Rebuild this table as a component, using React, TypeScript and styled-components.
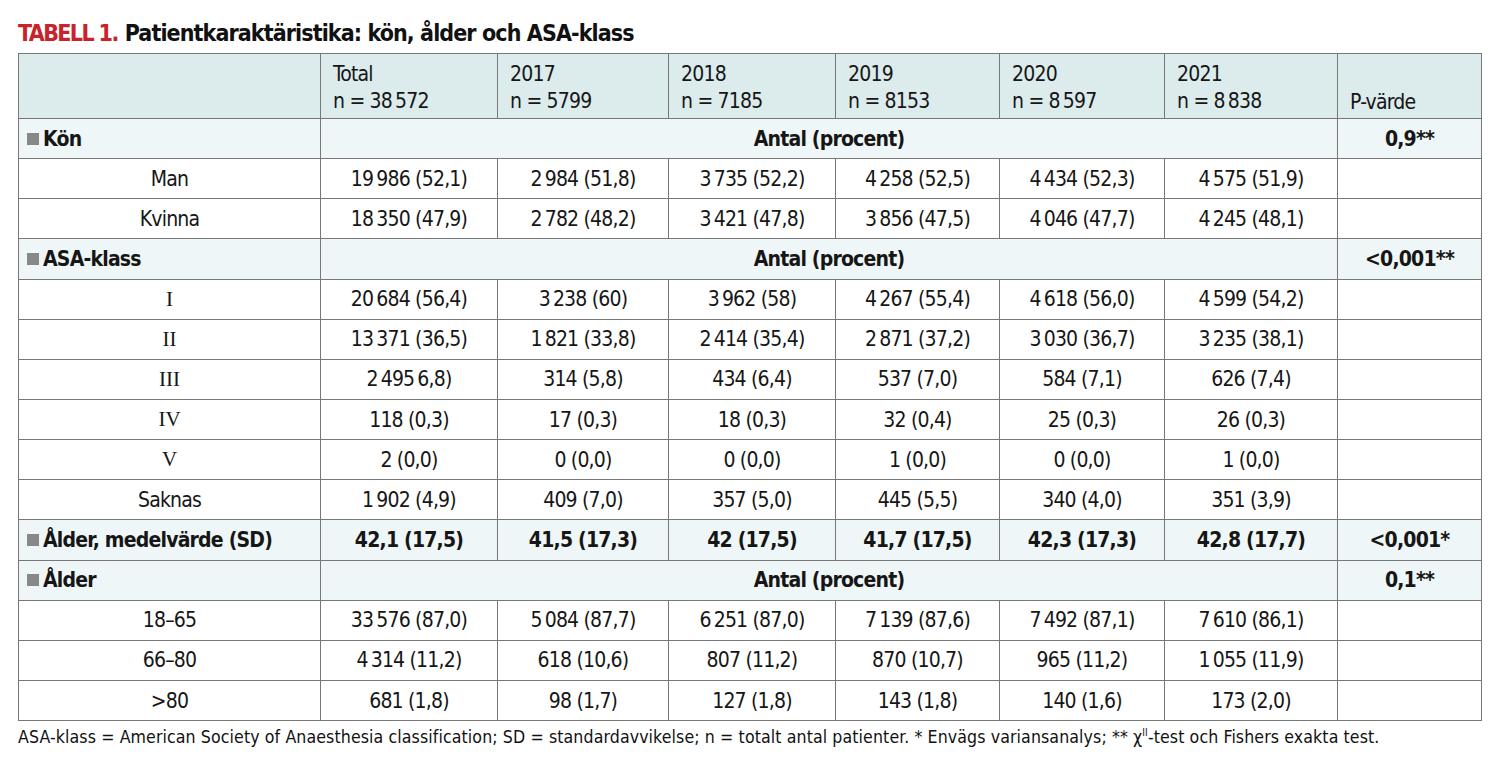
import React from "react";
import styled, { createGlobalStyle } from "styled-components";

const Global = createGlobalStyle`
  html, body { margin: 0; padding: 0; background: #fff; }
  body { font-family: "DejaVu Sans Condensed", "Roboto", sans-serif; color: #161616; }
`;

const Page = styled.div`
  padding: 18px 0 0 18px;
  width: 1463px;
`;

const Title = styled.h1`
  margin: 0 0 5px 0;
  font-size: 23px;
  line-height: 30px;
  font-weight: 700;
  color: #111;
  letter-spacing: -0.9px;
  white-space: nowrap;
`;

const Label = styled.span`
  color: #c8222a;
  font-weight: 700;
  letter-spacing: -1.6px;
  margin-right: 7px;
`;

const Table = styled.table`
  width: 1463px;
  border-collapse: collapse;
  table-layout: fixed;
  font-size: 21px;
  letter-spacing: -0.8px;
  border: 1.5px solid #777;
`;

const HeadRow = styled.tr`
  height: 65px;
`;

const HeadCell = styled.th<{ $bottom?: boolean }>`
  background: #dcebec;
  border: 1.5px solid #777;
  text-align: left;
  font-weight: 400;
  padding: ${(p) => (p.$bottom ? "0 12px 2px" : "3px 12px 0")};
  vertical-align: ${(p) => (p.$bottom ? "bottom" : "middle")};
  line-height: 27px;
`;

const Row = styled.tr<{ $section?: boolean }>`
  background: ${(p) => (p.$section ? "#eff6f7" : "#fff")};
  height: 40.15px;
`;

const Cell = styled.td<{ $bold?: boolean; $left?: boolean; $serif?: boolean }>`
  border: 1.5px solid #777;
  text-align: ${(p) => (p.$left ? "left" : "center")};
  padding: 0 8px;
  font-weight: ${(p) => (p.$bold ? 700 : 400)};
  font-family: ${(p) => (p.$serif ? '"Liberation Serif", serif' : "inherit")};
  letter-spacing: ${(p) => (p.$serif ? "0" : "inherit")};
  white-space: nowrap;
`;

const Square = styled.span`
  display: inline-block;
  width: 12px;
  height: 12px;
  background: #888;
  margin-right: 4px;
  vertical-align: 1px;
`;

const Footer = styled.p`
  margin: 6px 0 0 0;
  font-size: 17.6px;
  letter-spacing: 0.1px;
  color: #111;
  white-space: nowrap;
`;

const Sup = styled.sup`
  font-size: 10px;
`;

type DataRow = { label: string; values: string[]; serif?: boolean };

const years = [
  ["Total", "n = 38\u2009572"],
  ["2017", "n = 5799"],
  ["2018", "n = 7185"],
  ["2019", "n = 8153"],
  ["2020", "n = 8\u2009597"],
  ["2021", "n = 8\u2009838"],
];

const t = (s: string) => s.replace(/(\d) (\d)/g, "$1\u2009$2");

const kon: DataRow[] = [
  { label: "Man", values: ["19 986 (52,1)", "2 984 (51,8)", "3 735 (52,2)", "4 258 (52,5)", "4 434 (52,3)", "4 575 (51,9)"] },
  { label: "Kvinna", values: ["18 350 (47,9)", "2 782 (48,2)", "3 421 (47,8)", "3 856 (47,5)", "4 046 (47,7)", "4 245 (48,1)"] },
];

const asa: DataRow[] = [
  { label: "I", serif: true, values: ["20 684 (56,4)", "3 238 (60)", "3 962 (58)", "4 267 (55,4)", "4 618 (56,0)", "4 599 (54,2)"] },
  { label: "II", serif: true, values: ["13 371 (36,5)", "1 821 (33,8)", "2 414 (35,4)", "2 871 (37,2)", "3 030 (36,7)", "3 235 (38,1)"] },
  { label: "III", serif: true, values: ["2 495 6,8)", "314 (5,8)", "434 (6,4)", "537 (7,0)", "584 (7,1)", "626 (7,4)"] },
  { label: "IV", serif: true, values: ["118 (0,3)", "17 (0,3)", "18 (0,3)", "32 (0,4)", "25 (0,3)", "26 (0,3)"] },
  { label: "V", serif: true, values: ["2 (0,0)", "0 (0,0)", "0 (0,0)", "1 (0,0)", "0 (0,0)", "1 (0,0)"] },
  { label: "Saknas", values: ["1 902 (4,9)", "409 (7,0)", "357 (5,0)", "445 (5,5)", "340 (4,0)", "351 (3,9)"] },
];

const alder: DataRow[] = [
  { label: "18–65", values: ["33 576 (87,0)", "5 084 (87,7)", "6 251 (87,0)", "7 139 (87,6)", "7 492 (87,1)", "7 610 (86,1)"] },
  { label: "66–80", values: ["4 314 (11,2)", "618 (10,6)", "807 (11,2)", "870 (10,7)", "965 (11,2)", "1 055 (11,9)"] },
  { label: ">80", values: ["681 (1,8)", "98 (1,7)", "127 (1,8)", "143 (1,8)", "140 (1,6)", "173 (2,0)"] },
];

const widths = [302, 177, 171, 167, 164, 165, 173, 144];

function Section({ title, p }: { title: string; p: string }) {
  return (
    <Row $section>
      <Cell $left $bold>
        <Square />
        {title}
      </Cell>
      <Cell colSpan={6} $bold>
        Antal (procent)
      </Cell>
      <Cell $bold>{p}</Cell>
    </Row>
  );
}

function Data({ rows }: { rows: DataRow[] }) {
  return (
    <>
      {rows.map((r) => (
        <Row key={r.label}>
          <Cell $serif={r.serif}>{r.label}</Cell>
          {r.values.map((v, i) => (
            <Cell key={i}>{t(v)}</Cell>
          ))}
          <Cell />
        </Row>
      ))}
    </>
  );
}

export default function App() {
  return (
    <Page>
      <Global />
      <Title>
        <Label>TABELL 1.</Label>Patientkaraktäristika: kön, ålder och ASA-klass
      </Title>
      <Table>
        <colgroup>
          {widths.map((w, i) => (
            <col key={i} style={{ width: w }} />
          ))}
        </colgroup>
        <thead>
          <HeadRow>
            <HeadCell />
            {years.map(([a, b]) => (
              <HeadCell key={a}>
                {a}
                <br />
                {b}
              </HeadCell>
            ))}
            <HeadCell $bottom>P-värde</HeadCell>
          </HeadRow>
        </thead>
        <tbody>
          <Section title="Kön" p="0,9**" />
          <Data rows={kon} />
          <Section title="ASA-klass" p="<0,001**" />
          <Data rows={asa} />
          <Row $section>
            <Cell $left $bold>
              <Square />
              Ålder, medelvärde (SD)
            </Cell>
            {["42,1 (17,5)", "41,5 (17,3)", "42 (17,5)", "41,7 (17,5)", "42,3 (17,3)", "42,8 (17,7)"].map((v) => (
              <Cell key={v} $bold>
                {v}
              </Cell>
            ))}
            <Cell $bold>&lt;0,001*</Cell>
          </Row>
          <Section title="Ålder" p="0,1**" />
          <Data rows={alder} />
        </tbody>
      </Table>
      <Footer>
        ASA-klass = American Society of Anaesthesia classification; SD = standardavvikelse; n = totalt antal patienter. * Envägs variansanalys; ** χ<Sup>II</Sup>-test och Fishers exakta test.
      </Footer>
    </Page>
  );
}
